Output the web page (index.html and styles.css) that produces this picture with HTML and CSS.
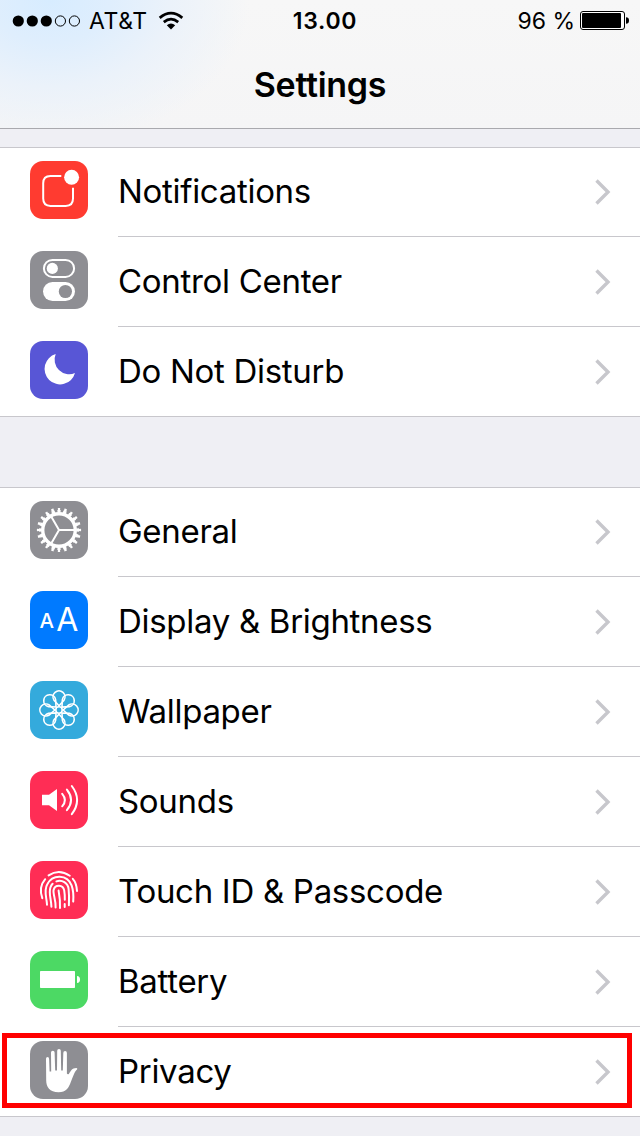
FILE: index.html
```html
<!DOCTYPE html>
<html lang="en">
<head>
	<meta charset="UTF-8">
	<title>Settings</title>
	<link rel="stylesheet" href="styles.css">
</head>
<body>
	<svg class="defs" width="0" height="0">
		<symbol id="chevron" viewBox="0 0 18 28">
			<path d="M2.5 2.5L14 14L2.5 25.5" fill="none" stroke="#c7c7cc" stroke-width="3.4"/>
		</symbol>
	</svg>

	<header class="navbar">
		<div class="status">
			<div class="carrier">
				<svg width="70" height="14" viewBox="0 0 70 14">
					<circle cx="6.3" cy="7" r="5.6"/>
					<circle cx="20.3" cy="7" r="5.6"/>
					<circle cx="34.3" cy="7" r="5.6"/>
					<circle cx="48.4" cy="7" r="5.1" fill="none" stroke="#000"/>
					<circle cx="62.4" cy="7" r="5.1" fill="none" stroke="#000"/>
				</svg>
				<span class="operator">AT&amp;T</span>
				<svg class="wifi" width="26" height="20" viewBox="0 0 26 20">
					<path d="M1.7 6.8Q13 -2.6 24.3 6.8" fill="none" stroke="#000" stroke-width="2.8"/>
					<path d="M5.8 11.1Q13 5.2 20.2 11.1" fill="none" stroke="#000" stroke-width="2.7"/>
					<path d="M8.8 14.2Q13 10.8 17.2 14.2L13 18.6Z"/>
				</svg>
			</div>
			<span class="time">13.00</span>
			<div class="power">
				<span class="percent">96 %</span>
				<svg width="50" height="20" viewBox="0 0 50 20">
					<rect x=".5" y=".5" width="44" height="18" rx="2.5" fill="#fff" stroke="#000"/>
					<rect x="2" y="2" width="39" height="15" rx="1"/>
					<path d="M46 6.2Q49 6.2 49 9.5Q49 12.8 46 12.8Z"/>
				</svg>
			</div>
		</div>
		<h1>Settings</h1>
	</header>

	<ul class="list">
		<li class="row">
			<svg class="icon red" viewBox="0 0 58 58">
				<path class="line" d="M31.3 15H20.5Q13.2 15 13.2 22.3V37.5Q13.2 44.9 20.5 44.9H35.7Q43 44.9 43 37.5V26.8"/>
				<circle cx="41.6" cy="16.3" r="7.5"/>
			</svg>
			<div class="cell"><span>Notifications</span><svg class="chevron"><use href="#chevron"/></svg></div>
		</li>
		<li class="row">
			<svg class="icon gray" viewBox="0 0 58 58">
				<rect class="line" x="13.9" y="8.9" width="30.2" height="17" rx="8.5"/>
				<circle cx="22.3" cy="17.4" r="5.6"/>
				<rect x="13" y="31" width="32" height="19" rx="9.5"/>
				<circle class="hole" cx="35.4" cy="40.5" r="6.6"/>
			</svg>
			<div class="cell"><span>Control Center</span><svg class="chevron"><use href="#chevron"/></svg></div>
		</li>
		<li class="row">
			<svg class="icon purple" viewBox="0 0 58 58">
				<path d="M25.7 13A15.5 15.5 0 1 0 45 32A14.6 14.6 0 0 1 25.7 13Z"/>
			</svg>
			<div class="cell"><span>Do Not Disturb</span><svg class="chevron"><use href="#chevron"/></svg></div>
		</li>
	</ul>

	<ul class="list">
		<li class="row">
			<svg class="icon gray" viewBox="0 0 58 58">
				<circle cx="29" cy="29" r="16.3" fill="none" stroke="#fff" stroke-width="3.4"/>
				<circle cx="29" cy="29" r="18.7" fill="none" stroke="#fff" stroke-width="2.6" pathLength="200" stroke-dasharray="5.6 4.4" stroke-dashoffset="2.8"/>
				<circle cx="29" cy="29" r="20.9" fill="none" stroke="#fff" stroke-width="2.4" pathLength="200" stroke-dasharray="3.6 6.4" stroke-dashoffset="1.8"/>
				<path class="line" d="M29 29H44M29 29L21.5 16M29 29L21.5 42"/>
			</svg>
			<div class="cell"><span>General</span><svg class="chevron"><use href="#chevron"/></svg></div>
		</li>
		<li class="row">
			<svg class="icon blue" viewBox="0 0 58 58">
				<text x="9.6" y="36.8" font-size="20.5" font-weight="500">A</text>
				<text x="26.2" y="40" font-size="32">A</text>
			</svg>
			<div class="cell"><span>Display &amp; Brightness</span><svg class="chevron"><use href="#chevron"/></svg></div>
		</li>
		<li class="row">
			<svg class="icon cyan" viewBox="0 0 58 58">
				<g class="line petals">
					<circle cx="29" cy="29" r="3.2"/>
					<path id="petal" d="M29 24.8L24 19.2A6 6 0 1 1 34 19.2Z"/>
					<use href="#petal" transform="rotate(45 29 29)"/>
					<use href="#petal" transform="rotate(90 29 29)"/>
					<use href="#petal" transform="rotate(135 29 29)"/>
					<use href="#petal" transform="rotate(180 29 29)"/>
					<use href="#petal" transform="rotate(225 29 29)"/>
					<use href="#petal" transform="rotate(270 29 29)"/>
					<use href="#petal" transform="rotate(315 29 29)"/>
				</g>
			</svg>
			<div class="cell"><span>Wallpaper</span><svg class="chevron"><use href="#chevron"/></svg></div>
		</li>
		<li class="row">
			<svg class="icon pink" viewBox="0 0 58 58">
				<path d="M12 23.8H19L27 18V40L19 34.2H12Z"/>
				<path class="line round" d="M32.2 22.8Q37.6 29 32.2 35.3M36.9 18.6Q45.2 29 36.9 39.2M41.8 15Q52.4 29 41.8 43.2"/>
			</svg>
			<div class="cell"><span>Sounds</span><svg class="chevron"><use href="#chevron"/></svg></div>
		</li>
		<li class="row">
			<svg class="icon pink" viewBox="0 0 58 58">
				<g class="line round">
					<path d="M18.6 14.4Q29 7.4 39.8 14.8"/>
					<path d="M15.2 18.2Q8.4 26 12.3 37.2"/>
					<path d="M42.8 17.8Q46.6 22 47 30"/>
					<path d="M17 43.8C16.8 36.5 13.4 29.5 17.3 23.2C22.6 13 37.2 13.2 41.6 24.4C43.6 30 43.6 35.5 43.2 40.6"/>
					<path d="M21.4 45.8C21.3 38 18.4 32.5 20.4 26.5Q21.2 24.2 22.6 22.8"/>
					<path d="M26.4 20.4C32 18.2 38 22 38.6 28C39.2 33.5 39.2 38 38.9 44.3"/>
					<path d="M25.6 46.5C26 39 22.8 33 23.6 29C25 23.2 33.1 23.4 34.2 29.4C34.8 33 34.9 35.5 34.8 38.8M34.7 43V46"/>
					<path d="M30 47C30.3 40.5 29.6 35 28.6 29.6"/>
				</g>
			</svg>
			<div class="cell"><span>Touch ID &amp; Passcode</span><svg class="chevron"><use href="#chevron"/></svg></div>
		</li>
		<li class="row">
			<svg class="icon green" viewBox="0 0 58 58">
				<rect x="10" y="20" width="35" height="17" rx=".8"/>
				<path d="M47 25Q50 25.4 50 28.5Q50 31.6 47 32Z"/>
			</svg>
			<div class="cell"><span>Battery</span><svg class="chevron"><use href="#chevron"/></svg></div>
		</li>
		<li class="row marked">
			<svg class="icon gray" viewBox="0 0 58 58">
				<path d="M16 17.7Q16 16 17.5 16Q19.1 16 19.1 17.7L19.6 30.4H21.2L21 11.5Q21 9.7 22.8 9.7Q24.6 9.7 24.6 11.5L25.2 29.6H27L27.2 9.8Q27.2 8 29 8Q30.8 8 30.8 9.8L31.2 29.6H32.8L33.3 11.9Q33.3 10.1 35.1 10.1Q36.9 10.1 36.9 11.9V32.5Q37.6 33.8 38.8 32.9C41 30 41.8 27.2 46.4 27.1Q47.7 27.3 47.2 28.3C43.8 31.4 43.4 35.6 41 40.4C38.8 46.6 36.2 51.2 28.6 51.2C19.6 51.2 16.2 46 16.2 39.5Z"/>
			</svg>
			<div class="cell"><span>Privacy</span><svg class="chevron"><use href="#chevron"/></svg></div>
		</li>
	</ul>
</body>
</html>
```
FILE: styles.css
```css
*, *::after {
	box-sizing: border-box;
}
body {
	margin: 0;
	height: 1136px;
	overflow: hidden;
	background: #efeff4;
	color: #000;
	font-family: Inter, "Liberation Sans", sans-serif;
}
.defs {
	position: absolute;
}

/* navigation bar */
.navbar {
	height: 129px;
	border-bottom: 1px solid #a9a9ae;
	background: radial-gradient(ellipse 200px 145px at 50px 0, #d7ecff 0%, #dfeefd 30%, #ebf2fa 60%, rgba(246,246,247,0) 100%), linear-gradient(#f7f7f7, #f5f5f6);
}
.status {
	display: grid;
	grid-template-columns: 1fr auto 1fr;
	align-items: center;
	height: 41px;
	padding: 0 10px 0 12px;
	font-size: 23px;
	line-height: 41px;
}
.status svg {
	display: block;
}
.status span {
	padding-top: 1px;
}
.carrier,
.power {
	display: flex;
	align-items: center;
}
.operator {
	margin-left: 7px;
	letter-spacing: 0.6px;
}
.wifi {
	margin-left: 10px;
}
.time {
	padding-left: 8px;
	font-weight: 600;
	letter-spacing: 0.7px;
}
.power {
	justify-content: flex-end;
	gap: 5px;
}
h1 {
	margin: 0;
	font-size: 34px;
	font-weight: 600;
	letter-spacing: -0.3px;
	line-height: 87px;
	text-align: center;
}

/* groups of rows */
.list {
	margin: 18px 0 70px;
	padding: 0;
	border-top: 1px solid #c8c7cc;
	background: #fff;
	list-style: none;
}
.row {
	display: flex;
	height: 90px;
	padding-left: 30px;
}
.row:first-child {
	margin-top: -1px;
}
.row:last-child {
	border-bottom: 1px solid #c8c7cc;
}
.cell {
	display: flex;
	flex: 1;
	align-items: center;
	justify-content: space-between;
	margin-left: 30px;
	padding-right: 28.5px;
	border-bottom: 1px solid #c8c7cc;
	font-size: 33px;
	letter-spacing: -0.3px;
	white-space: nowrap;
}
.cell span {
	padding-bottom: 2px;
}
.row:last-child .cell {
	border-bottom: none;
}
.chevron {
	width: 18px;
	height: 28px;
}

/* icons */
.icon {
	width: 58px;
	height: 58px;
	margin-top: 14px;
	border-radius: 13px;
	fill: #fff;
}
.icon .line {
	fill: none;
	stroke: #fff;
	stroke-width: 2;
}
.icon .petals {
	stroke-width: 1.6;
}
.icon .round {
	stroke-linecap: round;
}
.hole {
	fill: #8e8e93;
}
.red {
	background: #ff3b30;
}
.gray {
	background: #8e8e93;
}
.purple {
	background: #5856d6;
}
.blue {
	background: #007aff;
}
.cyan {
	background: #34aadc;
}
.pink {
	background: #ff2d55;
}
.green {
	background: #4cd964;
}

/* red frame drawn over the row */
.marked {
	position: relative;
}
.marked::after {
	content: "";
	position: absolute;
	top: 6px;
	right: 8px;
	left: 2px;
	height: 75px;
	border: 5px solid #f00;
}
```
